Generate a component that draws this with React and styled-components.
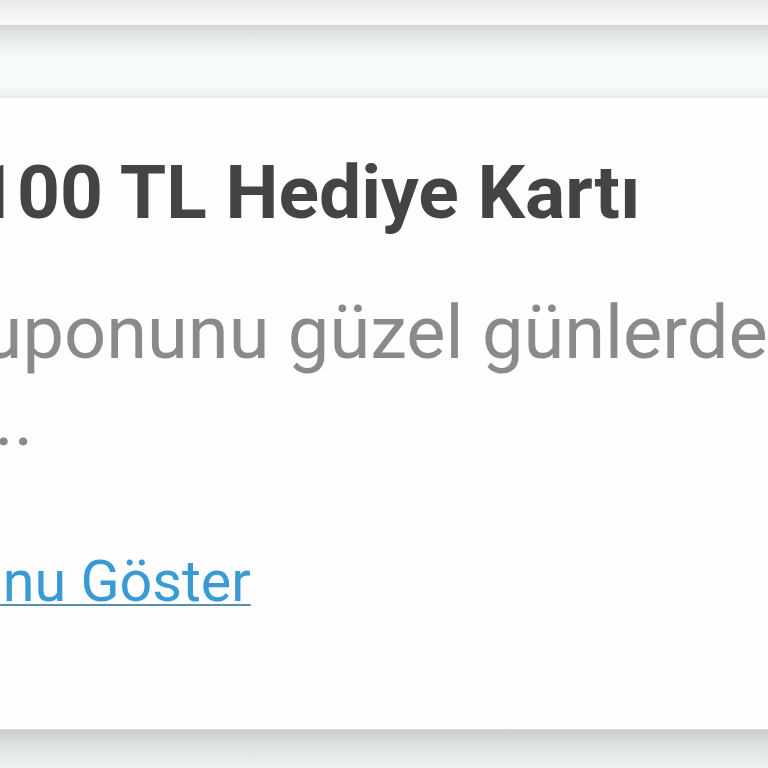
import styled, { createGlobalStyle } from 'styled-components'

const GlobalStyle = createGlobalStyle`
  html, body {
    margin: 0;
    padding: 0;
    background: #eef2f2;
  }
  body {
    width: 768px;
    height: 768px;
    overflow: hidden;
    font-family: Roboto, "Noto Sans", Arial, sans-serif;
  }
`

const Screen = styled.div`
  display: flex;
  flex-direction: column;
  width: 768px;
  height: 768px;
  overflow: hidden;
`

const StatusBar = styled.div`
  height: 25px;
  background: linear-gradient(#e8e8e8, #f6f6f6 70%, #f9f9f9);
  border-bottom: 1px solid #d3d5d5;
  flex-shrink: 0;
`

const Band = styled.div`
  height: 70px;
  background: linear-gradient(#d6dada, #eaeeee 25%, #f5fafa 45%, #f5fafa 85%, #eef1f2);
  border-bottom: 2px solid #e7e9eb;
  flex-shrink: 0;
`

const Card = styled.div`
  height: 632px;
  flex-shrink: 0;
  background: #fefefe;
  padding-top: 49px;
  box-sizing: border-box;
  border-bottom: 1px solid #d6d6d6;
  overflow: hidden;
`

const BottomShade = styled.div`
  flex: 1;
  background: linear-gradient(#cccdcd, #dfe2e2 40%, #eef2f2);
`

const Title = styled.h2`
  margin: 0 0 0 ${p => p.$shift}px;
  font-size: 75px;
  line-height: 90px;
  font-weight: 700;
  color: #444;
  white-space: nowrap;
`

const Body = styled.p`
  margin: 52px 0 0 ${p => p.$shift}px;
  font-size: 74px;
  line-height: 87px;
  font-weight: 400;
  color: #8a8a8a;
  white-space: nowrap;
`

const LinkRow = styled.div`
  margin: 86px 0 0 ${p => p.$shift}px;
  line-height: 66px;
  white-space: nowrap;
`

const ShowLink = styled.a`
  font-size: 57.5px;
  color: #3a9ad3;
  text-decoration: underline;
  text-decoration-color: #5a8ea9;
  text-decoration-thickness: 2px;
  text-underline-offset: 3px;
`

export default function App() {
  return (
    <>
      <GlobalStyle />
      <Screen>
        <StatusBar />
        <Band />
        <Card>
          <Title $shift={-26}>100 TL Hediye Kartı</Title>
          <Body $shift={-64}>
            Kuponunu güzel günlerde
            <br />
            al..
          </Body>
          <LinkRow $shift={-193}>
            <ShowLink href="#">Kuponunu Göster</ShowLink>
          </LinkRow>
        </Card>
        <BottomShade />
      </Screen>
    </>
  )
}
